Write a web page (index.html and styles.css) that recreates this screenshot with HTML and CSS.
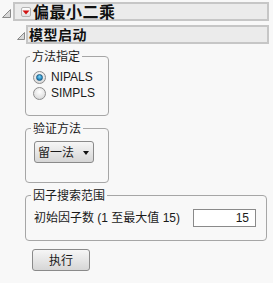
FILE: index.html
```html
<!DOCTYPE html>
<html lang="zh">
<head>
<meta charset="utf-8">
<title>偏最小二乘</title>
<link rel="stylesheet" href="styles.css">
</head>
<body>
<div class="report">
  <div class="outline-head head-main">
    <svg class="disc" width="9" height="9" viewBox="0 0 9 9"><polygon points="0.5,8.5 8.5,0.5 8.5,8.5" fill="#d8d8d8" stroke="#8a8a8a" stroke-width="1"/></svg>
    <div class="bar bar-main">
      <span class="menu-btn"><svg width="8" height="5" viewBox="0 0 8 5"><polygon points="0.5,0.5 7.5,0.5 4,4.5" fill="#d11414"/></svg></span>
      <span class="title-main">偏最小二乘</span>
    </div>
  </div>
  <div class="outline-head head-sub">
    <svg class="disc" width="8" height="8" viewBox="0 0 8 8"><polygon points="0.5,7.5 7.5,0.5 7.5,7.5" fill="#d8d8d8" stroke="#8a8a8a" stroke-width="1"/></svg>
    <div class="bar bar-sub">
      <span class="title-sub">模型启动</span>
    </div>
  </div>
  <div class="content">
    <fieldset class="group g-method">
      <legend>方法指定</legend>
      <div class="radio-row"><span class="radio on"></span><span class="rlabel">NIPALS</span></div>
      <div class="radio-row"><span class="radio"></span><span class="rlabel">SIMPLS</span></div>
    </fieldset>
    <fieldset class="group g-valid">
      <legend>验证方法</legend>
      <div class="combo"><span class="combo-text">留一法</span><span class="combo-arrow"></span></div>
    </fieldset>
    <fieldset class="group g-factor">
      <legend>因子搜索范围</legend>
      <div class="factor-row">
        <span class="flabel">初始因子数 (1 至最大值 15)</span>
        <span class="num-box">15</span>
      </div>
    </fieldset>
    <div class="run-btn">执行</div>
  </div>
</div>
</body>
</html>
```

FILE: styles.css
```css
html, body {
  margin: 0;
  padding: 0;
  background: #f8f8f8;
}
body {
  font-family: "Liberation Sans", "Noto Sans CJK SC", sans-serif;
  font-size: 12px;
  color: #1a1a1a;
}
.report {
  padding: 2px 0 0 2px;
}
.outline-head {
  display: flex;
  align-items: center;
}
.disc {
  display: block;
  flex: none;
}
.head-main .disc {
  margin-right: 2px;
  margin-top: 3px;
}
.head-sub {
  margin-top: 4px;
  margin-left: 15px;
}
.head-sub .disc {
  margin-right: 1px;
  margin-top: 2px;
}
.bar {
  box-sizing: border-box;
  height: 19px;
  border: 2px solid #c6c6c6;
  background: #ebebeb;
  display: flex;
  align-items: center;
}
.bar-main {
  width: 256px;
  padding-left: 6px;
}
.bar-sub {
  width: 243px;
  padding-left: 1px;
}
.menu-btn {
  box-sizing: border-box;
  width: 10px;
  height: 10px;
  border: 1px solid #b4b4b4;
  border-radius: 2px;
  background: linear-gradient(#fdfdfd, #e2e2e2);
  display: flex;
  align-items: center;
  justify-content: center;
  margin-right: 2px;
  margin-top: 1px;
}
.menu-btn svg {
  display: block;
}
.title-main {
  font-family: "Noto Sans CJK SC", sans-serif;
  font-weight: bold;
  font-size: 16px;
  line-height: 15px;
  color: #111;
  letter-spacing: 0.5px;
}
.title-sub {
  font-family: "Noto Sans CJK SC", sans-serif;
  font-weight: bold;
  font-size: 14px;
  line-height: 15px;
  color: #111;
  letter-spacing: 0.5px;
}
.content {
  margin-left: 23px;
  display: flex;
  flex-direction: column;
  align-items: flex-start;
}
.group {
  box-sizing: border-box;
  margin: 5px 0 0 0;
  border: 1px solid #a6a6a6;
  border-radius: 4px;
  padding: 0 0 0 7px;
  min-width: 0;
}
.group legend {
  font-family: "Noto Sans CJK SC", sans-serif;
  font-size: 12px;
  line-height: 14px;
  padding: 0 2px;
  margin-left: -3px;
  color: #1a1a1a;
}
.g-method {
  width: 84px;
  padding-top: 6px;
  padding-bottom: 14px;
}
.radio-row {
  display: flex;
  align-items: center;
  height: 16px;
}
.radio {
  box-sizing: border-box;
  width: 13px;
  height: 13px;
  border-radius: 50%;
  border: 1px solid #8d8d8d;
  background: radial-gradient(circle at 50% 35%, #ffffff 0%, #e6e6e6 55%, #cfcfcf 100%);
  display: flex;
  align-items: center;
  justify-content: center;
  margin-right: 5px;
}
.radio.on::after {
  content: "";
  box-sizing: border-box;
  width: 7px;
  height: 7px;
  border-radius: 50%;
  border: 1px solid #1f5f86;
  background: radial-gradient(circle at 50% 35%, #7fd4f4 0%, #2a8ec6 60%, #136393 100%);
}
.rlabel {
  font-size: 12px;
  line-height: 16px;
}
.g-valid {
  width: 84px;
  padding-top: 6px;
  padding-left: 8px;
  padding-bottom: 19px;
}
.combo {
  box-sizing: border-box;
  width: 60px;
  height: 22px;
  border: 1px solid #8a8a8a;
  border-radius: 3px;
  background: linear-gradient(#f6f6f6, #e6e6e6 50%, #d6d6d6);
  display: flex;
  align-items: center;
  padding-left: 3px;
}
.combo-text {
  font-family: "Noto Sans CJK SC", sans-serif;
  font-size: 12px;
  line-height: 14px;
}
.combo-arrow {
  width: 0;
  height: 0;
  border-left: 3.5px solid transparent;
  border-right: 3.5px solid transparent;
  border-top: 4px solid #111;
  margin-left: 9px;
  margin-top: 1px;
}
.g-factor {
  width: 242px;
  padding-top: 7px;
  padding-left: 8px;
  padding-right: 10px;
  padding-bottom: 13px;
}
.factor-row {
  display: flex;
  align-items: center;
  justify-content: space-between;
}
.flabel {
  font-size: 12px;
  line-height: 14px;
}
.num-box {
  box-sizing: border-box;
  width: 63px;
  height: 18px;
  border: 1px solid #8a8a8a;
  background: #fff;
  text-align: right;
  padding-right: 6px;
  font-size: 12px;
  line-height: 16px;
}
.run-btn {
  box-sizing: border-box;
  width: 58px;
  height: 22px;
  margin-top: 8px;
  margin-left: 7px;
  border: 1px solid #8a8a8a;
  border-radius: 3px;
  background: linear-gradient(#f6f6f6, #e6e6e6 50%, #d6d6d6);
  font-family: "Noto Sans CJK SC", sans-serif;
  font-size: 12px;
  line-height: 20px;
  text-align: center;
}
```
